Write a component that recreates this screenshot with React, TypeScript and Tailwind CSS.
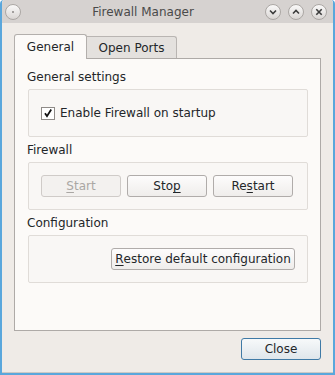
import React from 'react';

const font = "font-['DejaVu_Sans',sans-serif]";

function TitleButton({ kind }: { kind: 'menu' | 'min' | 'max' | 'close' }) {
  return (
    <svg width="16" height="16" viewBox="0 0 16 16" className="shrink-0">
      <defs>
        <linearGradient id={`tb-${kind}`} x1="0" y1="0" x2="0" y2="1">
          <stop offset="0" stopColor="#fbfafa" />
          <stop offset="1" stopColor="#d9d5d3" />
        </linearGradient>
      </defs>
      <circle cx="8" cy="8" r="7.5" fill={`url(#tb-${kind})`} stroke="#aaa6a3" />
      {kind === 'menu' && <circle cx="8" cy="8" r="1" fill="#8a8684" />}
      {kind === 'min' && <path d="M5 6.5 L8 9.5 L11 6.5" fill="none" stroke="#3c3c3c" strokeWidth="1.6" />}
      {kind === 'max' && <path d="M5 9.5 L8 6.5 L11 9.5" fill="none" stroke="#3c3c3c" strokeWidth="1.6" />}
      {kind === 'close' && <path d="M5.3 5.3 L10.7 10.7 M10.7 5.3 L5.3 10.7" fill="none" stroke="#3c3c3c" strokeWidth="1.6" />}
    </svg>
  );
}

function Btn({ children, disabled, width = 'w-[80px]' }: { children: React.ReactNode; disabled?: boolean; width?: string }) {
  return (
    <div
      className={`${width} h-[22px] flex items-center justify-center rounded-[3px] border ${
        disabled
          ? 'border-[#cfcbc8] bg-[#f3f1ef] text-[#aaa7a4]'
          : 'border-[#b0acaa] bg-gradient-to-b from-[#fdfcfc] to-[#efedeb] text-[#232629]'
      }`}
    >
      {children}
    </div>
  );
}

function U({ children }: { children: React.ReactNode }) {
  return <span className="underline underline-offset-[2px] decoration-1">{children}</span>;
}

function Section({ title, children, className = '' }: { title: string; children: React.ReactNode; className?: string }) {
  return (
    <div className={className}>
      <div className="h-[16px] leading-[16px] mb-[4px] ml-[12px]">{title}</div>
      <div className="ml-[13px] mr-[12px] h-[48px] border border-[#e0dcd8] bg-[#f9f7f5] rounded-[2px] flex items-center px-[12px]">
        {children}
      </div>
    </div>
  );
}

export default function App() {
  return (
    <div className={`${font} text-[12px] text-[#232629] w-[335px] h-[375px] flex flex-col border-x-2 border-b-2 border-[#5aa7dc] rounded-t-[4px] overflow-hidden`}>
      <div className="h-[23px] bg-[#d6d2d0] flex items-center px-[3px] shrink-0">
        <TitleButton kind="menu" />
        <div className="flex-1 text-center text-[#4a4a4a] leading-[16px]">Firewall Manager</div>
        <div className="flex gap-[7px] mr-[3px]">
          <TitleButton kind="min" />
          <TitleButton kind="max" />
          <TitleButton kind="close" />
        </div>
      </div>
      <div className="flex-1 bg-[#efebe7] flex flex-col px-[12px] pt-[11px] border-b border-[#cdc9c5]">
        <div className="flex items-end h-[24px]">
          <div className="relative z-10 w-[73px] h-[25px] -mb-px border-x border-t border-[#b3afac] rounded-t-[3px] bg-[#fcfaf8] flex justify-center pt-[4px] leading-[16px]">
            General
          </div>
          <div className="w-[90px] h-[22px] border-r border-t border-[#b9b5b2] rounded-tr-[3px] bg-[#e4e1de] flex justify-center pt-[3px] leading-[16px]">
            Open Ports
          </div>
        </div>
        <div className="h-[273px] border border-[#aeaaa7] bg-[#fcfaf8] pt-[10px]">
          <Section title="General settings">
            <div className="flex items-center gap-[5px]">
              <div className="w-[14px] h-[13px] border border-[#8f8b88] bg-white flex items-center justify-center">
                <svg width="10" height="10" viewBox="0 0 10 10">
                  <path d="M2 5.2 L4 8.2 L8.2 1.5" fill="none" stroke="#111" strokeWidth="1.8" />
                </svg>
              </div>
              <span>Enable Firewall on startup</span>
            </div>
          </Section>
          <Section title="Firewall" className="mt-[5px]">
            <div className="flex gap-[6px]">
              <Btn disabled>
                <U>S</U>tart
              </Btn>
              <Btn>
                Sto<U>p</U>
              </Btn>
              <Btn>
                Re<U>s</U>tart
              </Btn>
            </div>
          </Section>
          <Section title="Configuration" className="mt-[5px]">
            <div className="flex-1 flex justify-end">
              <Btn width="w-[184px]">
                <U>R</U>estore default configuration
              </Btn>
            </div>
          </Section>
        </div>
        <div className="flex justify-end mt-[7px]">
          <div className="w-[80px] h-[22px] flex items-center justify-center rounded-[3px] border border-[#3f7aa6] bg-gradient-to-b from-[#f7f9fa] to-[#dfe6eb]">
            Close
          </div>
        </div>
      </div>
    </div>
  );
}
